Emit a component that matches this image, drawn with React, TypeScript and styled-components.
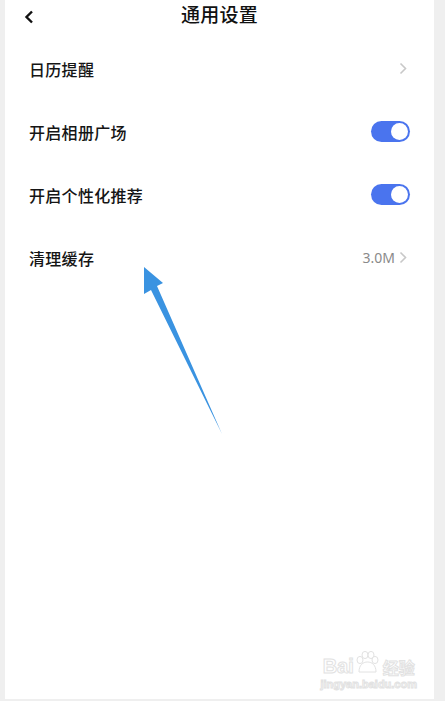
import React from "react";
import styled, { createGlobalStyle } from "styled-components";

const GlobalStyle = createGlobalStyle`
	html, body {
		margin: 0;
		padding: 0;
		background: #efefef;
	}
	body {
		font-family: "Noto Sans CJK SC", "Noto Sans", sans-serif;
	}
`;

// Page shell
const Page = styled.div`
	width: 445px;
	height: 701px;
	padding: 0 11px 2px 5px;
	box-sizing: border-box;
	background: #efefef;
`;

const Panel = styled.div`
	position: relative;
	height: 100%;
	background: #fff;
	overflow: hidden;
`;

// Header
const Header = styled.div`
	position: relative;
	height: 37px;
	display: flex;
	align-items: center;
	justify-content: center;
`;

const BackButton = styled.div`
	position: absolute;
	left: 17px;
	top: 9px;
	width: 14px;
	height: 16px;
	display: flex;
	align-items: center;
	justify-content: center;
`;

const Title = styled.div`
	font-size: 19px;
	font-weight: 500;
	color: #111;
	letter-spacing: 0.3px;
	margin-top: -11px;
`;

// Rows
const List = styled.div`
	display: flex;
	flex-direction: column;
`;

const Row = styled.div`
	height: 63px;
	display: flex;
	align-items: center;
	justify-content: space-between;
	padding: 0 24px 0 24px;
`;

const Label = styled.div`
	font-size: 16px;
	font-weight: 500;
	color: #151515;
	letter-spacing: 0.3px;
`;

const Trailing = styled.div`
	display: flex;
	align-items: center;
	gap: 4px;
	margin-right: 3px;
`;

const Value = styled.span`
	font-family: "Noto Sans", "Liberation Sans", sans-serif;
	font-size: 14px;
	color: #8a8a8a;
`;

const Toggle = styled.div<{ $on: boolean }>`
	width: 39px;
	height: 21px;
	border-radius: 11px;
	background: ${(p) => (p.$on ? "#4a74ee" : "#ddd")};
	display: flex;
	align-items: center;
	justify-content: ${(p) => (p.$on ? "flex-end" : "flex-start")};
	padding: 0 2px;
	box-sizing: border-box;
`;

const Knob = styled.div`
	width: 17px;
	height: 17px;
	border-radius: 50%;
	background: #fff;
`;

// Overlays
const Arrow = styled.svg`
	position: absolute;
	left: 0;
	top: 0;
	pointer-events: none;
`;

const Watermark = styled.div`
	position: absolute;
	right: 17px;
	bottom: 9px;
	display: flex;
	flex-direction: column;
	align-items: center;
	color: #fff;
	-webkit-text-stroke: 1px #e2e2e2;
`;

const MarkTop = styled.div`
	display: flex;
	align-items: flex-end;
	font-family: "Liberation Sans", sans-serif;
	font-weight: 700;
	font-size: 20px;
	line-height: 20px;
`;

const MarkCn = styled.span`
	font-family: "Noto Sans CJK SC", sans-serif;
	font-size: 16px;
	line-height: 18px;
	margin-left: 3px;
`;

const MarkUrl = styled.div`
	font-family: "Liberation Sans", sans-serif;
	font-size: 11px;
	font-weight: 700;
	margin-top: 2px;
`;

const Chevron = () => (
	<svg width="8" height="13" viewBox="0 0 8 13">
		<path d="M1.5 1.5 L6.5 6.5 L1.5 11.5" fill="none" stroke="#c8c8c8" strokeWidth="1.6" />
	</svg>
);

const Paw = () => (
	<svg width="26" height="26" viewBox="0 0 26 26" fill="#fff" stroke="#e2e2e2" strokeWidth="1">
		<ellipse cx="6" cy="10" rx="3" ry="3.6" />
		<ellipse cx="11" cy="5" rx="3" ry="3.6" />
		<ellipse cx="17" cy="5" rx="3" ry="3.6" />
		<ellipse cx="21" cy="10" rx="3" ry="3.6" />
		<path d="M5 22 C5 15 9 12 13.5 12 C18 12 22 15 22 22 Z" />
	</svg>
);

type Item = { label: string; toggle?: boolean; value?: string; chevron?: boolean };

const items: Item[] = [
	{ label: "日历提醒", chevron: true },
	{ label: "开启相册广场", toggle: true },
	{ label: "开启个性化推荐", toggle: true },
	{ label: "清理缓存", value: "3.0M", chevron: true },
];

export default function App() {
	return (
		<>
			<GlobalStyle />
			<Page>
				<Panel>
					<Header>
						<BackButton>
							<svg width="10" height="14" viewBox="0 0 10 14">
								<path d="M8 1.5 L2.5 7 L8 12.5" fill="none" stroke="#111" strokeWidth="2.4" />
							</svg>
						</BackButton>
						<Title>通用设置</Title>
					</Header>
					<List>
						{items.map((it) => (
							<Row key={it.label}>
								<Label>{it.label}</Label>
								{it.toggle ? (
									<Toggle $on>
										<Knob />
									</Toggle>
								) : (
									<Trailing>
										{it.value && <Value>{it.value}</Value>}
										{it.chevron && <Chevron />}
									</Trailing>
								)}
							</Row>
						))}
					</List>
					<Arrow width="429" height="699" viewBox="5 0 429 699">
						<polygon points="144,267 163,283 157,286 222,434 151,290 144,294" fill="#3a93e1" />
					</Arrow>
					<Watermark>
						<MarkTop>
							Bai
							<Paw />
							<MarkCn>经验</MarkCn>
						</MarkTop>
						<MarkUrl>jingyan.baidu.com</MarkUrl>
					</Watermark>
				</Panel>
			</Page>
		</>
	);
}
